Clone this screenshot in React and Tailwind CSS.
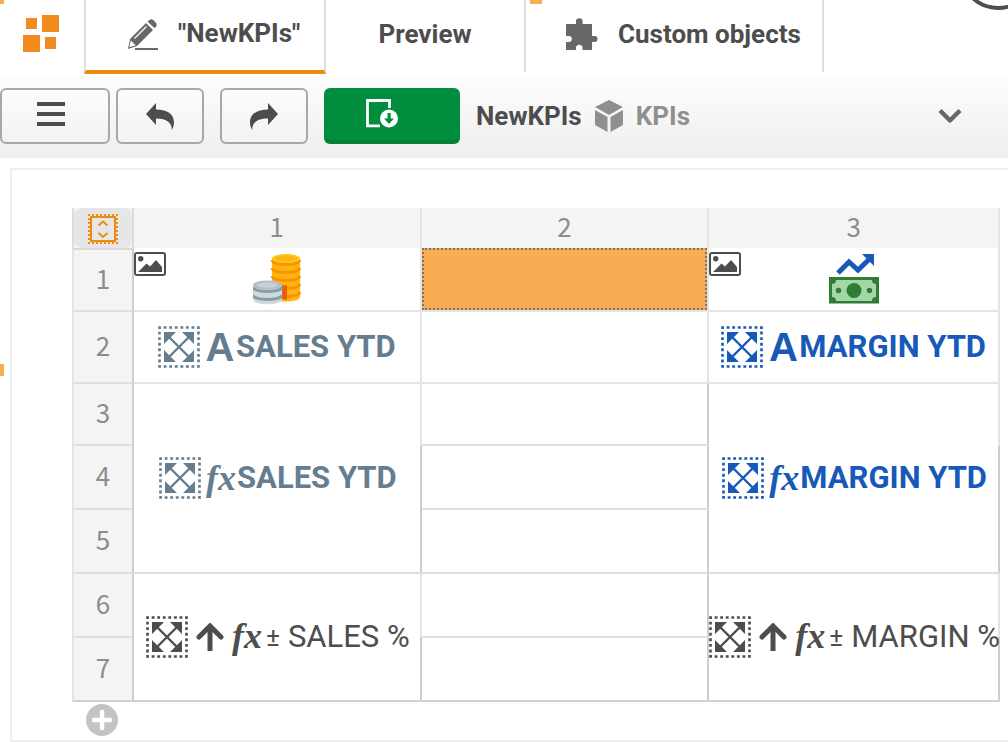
import React from "react";

function Logo() {
  return (
    <svg width="38" height="38" viewBox="0 0 38 38" fill="#f28b1d" aria-hidden="true">
      <rect x="4" y="3" width="11" height="11" />
      <rect x="20" y="0" width="17" height="17" />
      <rect x="1" y="20" width="17" height="17" />
      <rect x="23" y="22" width="11" height="12" />
    </svg>
  );
}

function PencilIcon() {
  return (
    <svg width="30" height="32" viewBox="0 0 30 32" aria-hidden="true">
      <path fill="#686868" d="M2 20 18 4l7 7L9 27l-9 3z" />
      <path fill="#686868" d="m19.500 2.500 1.800-1.600q2-1.600 4 .2l2.600 2.600q1.600 1.900.2 3.800L26.500 9.300z" />
      <path fill="#fff" d="m2.800 21.500 4.900 4.800-5.600 1.700-.7-.8z" />
      <path stroke="#fff" strokeWidth="1.300" d="M6.500 19.500 18.500 7.500" />
      <path fill="#686868" d="M7 29h23v2H7z" />
    </svg>
  );
}

function PuzzleIcon() {
  return (
    <svg width="32" height="32" viewBox="0 0 32 32" fill="#686868" aria-hidden="true">
      <path d="M0 6h10V3.500a3.300 3.300 0 0 1 6.600 0V6h9.400v12h2.500a3 3 0 0 1 0 6H26v8H16.500v-2.500a3.300 3.300 0 0 0-6.500 0V32H0v-8h2.800a3 3 0 0 0 0-6H0z" />
    </svg>
  );
}

function UndoIcon({ flip = false }) {
  return (
    <svg
      width="28"
      height="27"
      viewBox="0 0 28 27"
      fill="#4d4d4d"
      className={flip ? "-scale-x-100" : ""}
      aria-hidden="true"
    >
      <path d="M0 11 10 0v6.500c10 .3 18 3.500 18 13-.1 3-.9 5.300-2.200 7.500C26 20 21 15.500 10 15.500V22z" />
    </svg>
  );
}

function SaveIcon() {
  return (
    <svg width="33" height="30" viewBox="0 0 33 30" fill="none" aria-hidden="true">
      <path stroke="#fff" strokeWidth="2.800" d="M14 26.800H1.500V1.500h22V9" />
      <circle cx="23" cy="19.500" r="9" fill="#fff" />
      <path fill="#008d3d" d="M21.500 14h3.200v5.500h3.300L23 25l-5-5.500h3.500z" />
    </svg>
  );
}

function CubeIcon() {
  return (
    <svg width="30" height="32" viewBox="0 0 30 32" fill="#8f8f8f" aria-hidden="true">
      <path d="m15 0 14 7-14 8L1 7z" />
      <path d="m1 10 12.500 7v15L1 25z" />
      <path d="m29 10-12.500 7v15L29 25z" />
    </svg>
  );
}

function PictureIcon() {
  return (
    <svg width="32" height="24" viewBox="0 0 32 24" aria-hidden="true">
      <rect x="1" y="1" width="30" height="22" rx="2" fill="#fff" stroke="#4d4d4d" strokeWidth="2" />
      <circle cx="6.700" cy="6.700" r="2.700" fill="#4d4d4d" />
      <path fill="#4d4d4d" d="m4 20 8.500-8.500 3.500 3L22 8l6 7v5z" />
    </svg>
  );
}

function CoinsIcon() {
  return (
    <svg width="48" height="52" viewBox="0 0 48 52" aria-hidden="true">
      <path fill="#ffb511" d="M19 5v39c0 6 28 6 28 0V5z" />
      <g fill="none" stroke="#ff9100" strokeWidth="2.800">
        <path d="M19 7c1 6 27 6 28 0" />
        <path d="M19 15c1 6 27 6 28 0" />
        <path d="M19 23c1 6 27 6 28 0" />
        <path d="M19 31c1 6 27 6 28 0" />
        <path d="M19 39c1 6 27 6 28 0" />
      </g>
      <ellipse cx="33" cy="5.500" rx="14" ry="4.500" fill="#ffca28" />
      <ellipse cx="33" cy="5.500" rx="11.500" ry="3" fill="#ffb511" />
      <path fill="#e65100" opacity=".85" d="M29 32q4 1 5 0v15l-5-1z" />
      <path fill="#cfd8dc" d="M0 32v14c0 7 29 7 29 0V32z" />
      <g fill="none" stroke="#8a9ba5" strokeWidth="2.800">
        <path d="M0 34c1 6 28 6 29 0" />
        <path d="M0 42c1 6 28 6 29 0" />
      </g>
      <ellipse cx="14.500" cy="32" rx="14.500" ry="4.500" fill="#b0bec5" />
      <ellipse cx="14.500" cy="32" rx="11" ry="2.800" fill="#c6d0d5" />
    </svg>
  );
}

function MoneyIcon() {
  return (
    <svg width="50" height="50" viewBox="0 0 50 50" aria-hidden="true">
      <path fill="none" stroke="#1759b8" strokeWidth="5" d="m9 19 11-11 9 8L41 4.500" />
      <path fill="#1759b8" d="M33 0h12v12z" />
      <rect y="23" width="50" height="26.500" fill="#2e7d32" />
      <path fill="#a5d6a7" d="M7 26h36q0 4 4 4v13q-4 0-4 4H7q0-4-4-4V30q4 0 4-4z" />
      <circle cx="25" cy="36.500" r="7.500" fill="#2e7d32" />
      <circle cx="9.500" cy="36.500" r="2.700" fill="#2e7d32" />
      <circle cx="40.500" cy="36.500" r="2.700" fill="#2e7d32" />
    </svg>
  );
}

function ExpandIcon() {
  return (
    <svg width="42" height="42" viewBox="0 0 42 42" className="shrink-0" aria-hidden="true">
      <rect
        x="1.500"
        y="1.500"
        width="39"
        height="39"
        fill="none"
        stroke="currentColor"
        strokeWidth="2.600"
        strokeDasharray="2.900 2.671"
        strokeDashoffset="1.450"
      />
      <path stroke="currentColor" strokeWidth="2.400" d="m9 9 24 24M33 9 9 33" />
      <path
        fill="currentColor"
        d="M6 6h12L6 18zM36 6v12L24 6zM6 36V24l12 12zM36 36H24l12-12z"
      />
    </svg>
  );
}

function ArrowUpIcon() {
  return (
    <svg width="28" height="28" viewBox="0 0 28 28" className="shrink-0" fill="none" stroke="currentColor" aria-hidden="true">
      <path strokeWidth="5" d="M14 3v25" />
      <path strokeWidth="5" strokeLinecap="round" d="M3 14 14 3l11 11" />
    </svg>
  );
}

function Fx() {
  return (
    <span className="font-['Liberation_Serif',serif] text-[36px] leading-8 font-bold italic">fx</span>
  );
}

function Measure({ kind, children }) {
  return (
    <div className="flex items-center justify-center whitespace-nowrap">
      <ExpandIcon />
      <span className="ml-1 flex w-8 shrink-0 items-center justify-center">
        {kind === "label" ? (
          <span className="font-['Liberation_Sans',sans-serif] text-[40px] leading-8 font-bold">A</span>
        ) : (
          <Fx />
        )}
      </span>
      <span className="text-[31px] leading-8 font-bold">{children}</span>
    </div>
  );
}

function Trend({ children }) {
  return (
    <div className="flex items-center justify-center whitespace-nowrap">
      <ExpandIcon />
      <span className="ml-2 flex">
        <ArrowUpIcon />
      </span>
      <span className="ml-2">
        <Fx />
      </span>
      <span className="ml-1 text-[26px] leading-8">±</span>
      <span className="ml-2 text-[31px] leading-8">{children}</span>
    </div>
  );
}

const line = "border-r-2 border-b-2 border-[#e4e4e4]";
const merged3 =
  "bg-[linear-gradient(to_bottom,#e4e4e4_33%,#cdcdcd_33%)] bg-[length:2px_100%] bg-right bg-no-repeat border-b-2 border-[#dedede] pr-[2px]";
const merged2 =
  "bg-[linear-gradient(to_bottom,#e4e4e4_50%,#cdcdcd_50%)] bg-[length:2px_100%] bg-right bg-no-repeat border-b-2 border-[#d0d0d0] pr-[2px]";
const darkRight = "border-r-2 border-b-2 border-r-[#cdcdcd] border-b-[#e0e0e0]";
const lastRow = "border-r-2 border-b-2 border-r-[#cdcdcd] border-b-[#d0d0d0]";

function RowHead({ n, first = false, last = false }) {
  return (
    <th
      scope="row"
      className={`border-r-2 border-b-2 border-l-2 border-l-[#e4e4e4] border-r-[#cdcdcd] bg-[#f4f4f4] font-['Noto_Sans_CJK_JP',sans-serif] text-[26px] leading-7 font-normal text-[#8c8c8c] ${
        first ? "border-t-2 border-t-[#d9d9d9]" : ""
      } ${last ? "border-b-[#d0d0d0]" : "border-b-[#dedede]"}`}
    >
      <div className="pb-1">{n}</div>
    </th>
  );
}

function ColumnHead({ n }) {
  return (
    <th scope="col" className="border-r-2 border-[#e4e4e4] font-normal">
      <div className="pb-1">{n}</div>
    </th>
  );
}

function LayoutTable() {
  return (
    <table className="w-full table-fixed border-separate border-spacing-0 text-center [&_td]:p-0 [&_th]:p-0">
      <colgroup>
        <col className="w-[62px]" />
        <col className="w-[31%]" />
        <col className="w-[31%]" />
        <col />
      </colgroup>
      <thead>
        <tr className="h-10 bg-[#f4f4f4] font-['Noto_Sans_CJK_JP',sans-serif] text-[26px] leading-7 text-[#8c8c8c]">
          <th className="border-r-2 border-l-2 border-[#dcdcdc]">
            <div className="flex h-10 items-center justify-center rounded-lg bg-[#e6e6e6]">
              <button
                aria-label="Resize"
                className="mt-[2px] flex size-[30px] items-center justify-center border-2 border-dotted border-[#f08c10]"
              >
                <svg width="26" height="26" viewBox="0 0 26 26" fill="none" stroke="#ec8b12" strokeWidth="2" aria-hidden="true">
                  <rect x="1" y="1" width="24" height="24" />
                  <path d="m8.500 9.500 4.500-4 4.500 4M8.500 17l4.500 4 4.500-4" />
                </svg>
              </button>
            </div>
          </th>
          <ColumnHead n="1" />
          <ColumnHead n="2" />
          <ColumnHead n="3" />
        </tr>
      </thead>
      <tbody>
        <tr className="h-16">
          <RowHead n="1" first />
          <td className={`relative ${line}`}>
            <span className="absolute top-1 left-0">
              <PictureIcon />
            </span>
            <div className="flex justify-center">
              <CoinsIcon />
            </div>
          </td>
          <td className="border-r-2 border-b-2 border-[#e4e4e4]">
            <button
              aria-label="Selected cell"
              className="block h-[62px] w-full border-2 border-dotted border-[#757575] bg-[#f8ad54]"
            />
          </td>
          <td className={`relative ${line}`}>
            <span className="absolute top-1 left-0">
              <PictureIcon />
            </span>
            <div className="flex justify-center">
              <MoneyIcon />
            </div>
          </td>
        </tr>
        <tr className="h-[72px]">
          <RowHead n="2" />
          <td className={`${line} text-[#657d90]`}>
            <Measure kind="label">SALES YTD</Measure>
          </td>
          <td className={line} />
          <td className={`${line} text-[#1759b8]`}>
            <Measure kind="label">MARGIN YTD</Measure>
          </td>
        </tr>
        <tr className="h-[62px]">
          <RowHead n="3" />
          <td rowSpan={3} className={`${merged3} text-[#657d90]`}>
            <Measure kind="fx">SALES YTD</Measure>
          </td>
          <td className={darkRight} />
          <td rowSpan={3} className={`${merged3} text-[#1759b8]`}>
            <Measure kind="fx">MARGIN YTD</Measure>
          </td>
        </tr>
        <tr className="h-16">
          <RowHead n="4" />
          <td className={darkRight} />
        </tr>
        <tr className="h-16">
          <RowHead n="5" />
          <td className={darkRight} />
        </tr>
        <tr className="h-16">
          <RowHead n="6" />
          <td rowSpan={2} className={`${merged2} text-[#4d4d4d]`}>
            <Trend>SALES %</Trend>
          </td>
          <td className={darkRight} />
          <td rowSpan={2} className={`${merged2} text-[#4d4d4d]`}>
            <Trend>MARGIN %</Trend>
          </td>
        </tr>
        <tr className="h-16">
          <RowHead n="7" last />
          <td className={lastRow} />
        </tr>
      </tbody>
    </table>
  );
}

export default function App() {
  const toolButton =
    "flex h-14 items-center justify-center rounded-md border-2 border-[#a8a8a8] bg-linear-to-b from-[#fcfcfc] to-[#f2f2f2]";
  return (
    <div className="relative overflow-hidden bg-white font-['Roboto',sans-serif] text-[#4d4d4d]">
      <span className="absolute top-0 left-0 size-1 bg-[#f8ad54]" />
      <span className="absolute top-0 left-[530px] h-1 w-3 bg-[#f8ad54]" />
      <span className="absolute top-[364px] left-0 h-3 w-1 bg-[#f8ad54]" />
      <svg className="absolute top-0 right-0" width="40" height="12" viewBox="0 0 40 12" fill="none" aria-hidden="true">
        <circle cx="30" cy="-29" r="37" stroke="#4d4d4d" strokeWidth="4" />
      </svg>

      <nav className="flex h-[76px] items-start pb-1 text-[26px] leading-8 font-bold whitespace-nowrap">
        <a href="#home" aria-label="Home" className="flex h-[68px] w-[84px] items-center justify-center pr-[2px]">
          <Logo />
        </a>
        <button className="flex h-[74px] w-[242px] items-center border-x-2 border-b-4 border-x-[#dedede] border-b-[#ef8a10] pl-[42px] text-left">
          <PencilIcon />
          <span className="-mt-1 ml-5">"NewKPIs"</span>
        </button>
        <button className="flex h-[72px] w-[200px] items-center justify-center border-r-2 border-[#dedede]">
          <span className="-mt-1">Preview</span>
        </button>
        <button className="flex h-[72px] w-[298px] items-center border-r-2 border-[#dedede] pb-1 pl-10">
          <PuzzleIcon />
          <span className="ml-5">Custom objects</span>
        </button>
      </nav>

      <header className="flex h-[82px] items-center bg-linear-to-b from-[#fdfdfd] to-[#eeeeee] pt-3 pb-[14px] text-[26px] leading-8 font-bold">
        <button aria-label="Menu" className={`${toolButton} w-[110px]`}>
          <svg width="28" height="24" viewBox="0 0 28 24" fill="#4d4d4d" className="mr-2 -mt-1" aria-hidden="true">
            <path d="M0 0h28v4H0zM0 10h28v4H0zM0 20h28v4H0z" />
          </svg>
        </button>
        <button aria-label="Undo" className={`${toolButton} ml-[6px] w-[88px]`}>
          <UndoIcon />
        </button>
        <button aria-label="Redo" className={`${toolButton} ml-4 w-[88px]`}>
          <UndoIcon flip />
        </button>
        <button
          aria-label="Save"
          className="ml-4 flex h-14 w-[136px] items-center justify-center rounded-md border-b-4 border-[#067f38] bg-[#008d3d] pr-5"
        >
          <SaveIcon />
        </button>
        <span className="ml-4">NewKPIs</span>
        <span className="ml-3">
          <CubeIcon />
        </span>
        <span className="ml-3 text-[#8f8f8f]">KPIs</span>
        <button aria-label="Show more" className="mr-[46px] ml-auto">
          <svg width="24" height="16" viewBox="0 0 24 16" fill="none" stroke="#686868" strokeWidth="4.500" strokeLinejoin="round" aria-hidden="true">
            <path d="m2 2.500 10 10 10-10" />
          </svg>
        </button>
      </header>

      <main className="mt-[10px] ml-[10px] border-y-2 border-l-2 border-[#eeeeee] pt-[38px] pr-2 pb-1 pl-[60px]">
        <LayoutTable />
        <button aria-label="Add row" className="mt-[2px] ml-[14px] flex size-8 items-center justify-center rounded-full bg-[#c4c4c4]">
          <svg width="20" height="20" viewBox="0 0 20 20" fill="none" stroke="#fff" strokeWidth="4.500" strokeLinecap="round" aria-hidden="true">
            <path d="M10 2v16M2 10h16" />
          </svg>
        </button>
      </main>
    </div>
  );
}
